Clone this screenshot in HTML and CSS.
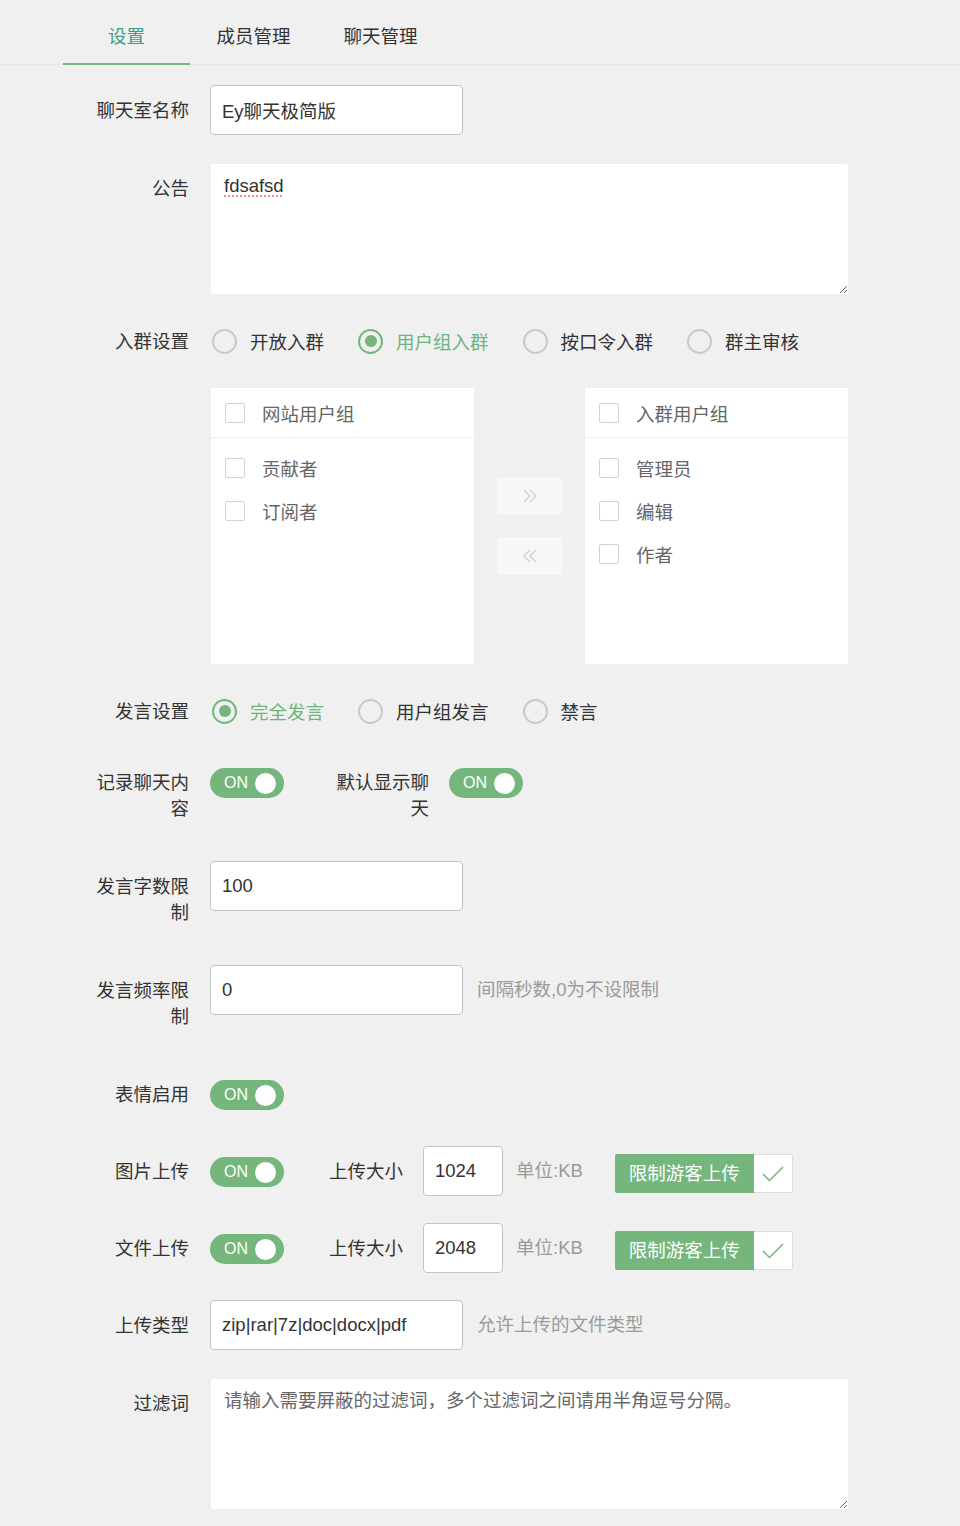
FILE: index.html
```html
<!DOCTYPE html>
<html lang="zh-CN">

<head>
  <link rel="stylesheet" href="styles.css">
  <meta charset="UTF-8">
  <meta name="viewport" content="width=device-width, initial-scale=1.0">
  <title>聊天室设置</title>
</head>

<body>

<div class="tab-bar">
  <div class="tab tab-active">设置</div>
  <div class="tab">成员管理</div>
  <div class="tab">聊天管理</div>
</div>

<form class="form">

  <div class="form-item">
    <label class="form-label">聊天室名称</label>
    <input class="input" type="text" value="Ey聊天极简版">
  </div>

  <div class="form-item">
    <label class="form-label">公告</label>
    <textarea class="textarea textarea-notice">fdsafsd</textarea>
  </div>

  <div class="form-item form-item-radio">
    <label class="form-label">入群设置</label>
    <div class="radio-group">
      <span class="radio"><i class="radio-icon"></i>开放入群</span>
      <span class="radio radio-checked"><i class="radio-icon"></i>用户组入群</span>
      <span class="radio"><i class="radio-icon"></i>按口令入群</span>
      <span class="radio"><i class="radio-icon"></i>群主审核</span>
    </div>
  </div>

  <div class="form-item">
    <div class="form-label"></div>
    <div class="transfer">
      <div class="transfer-box">
        <div class="transfer-head"><i class="checkbox"></i>网站用户组</div>
        <ul class="transfer-list">
          <li><i class="checkbox"></i>贡献者</li>
          <li><i class="checkbox"></i>订阅者</li>
        </ul>
      </div>
      <div class="transfer-buttons">
        <button type="button" class="transfer-btn">
          <svg width="18" height="18" viewBox="0 0 18 18" fill="none" stroke="#cfcfcf" stroke-width="1.4"><path d="M3 3l6 6-6 6M9 3l6 6-6 6"/></svg>
        </button>
        <button type="button" class="transfer-btn">
          <svg width="18" height="18" viewBox="0 0 18 18" fill="none" stroke="#cfcfcf" stroke-width="1.4"><path d="M9 3L3 9l6 6M15 3l-6 6 6 6"/></svg>
        </button>
      </div>
      <div class="transfer-box">
        <div class="transfer-head"><i class="checkbox"></i>入群用户组</div>
        <ul class="transfer-list">
          <li><i class="checkbox"></i>管理员</li>
          <li><i class="checkbox"></i>编辑</li>
          <li><i class="checkbox"></i>作者</li>
        </ul>
      </div>
    </div>
  </div>

  <div class="form-item form-item-radio">
    <label class="form-label">发言设置</label>
    <div class="radio-group">
      <span class="radio radio-checked"><i class="radio-icon"></i>完全发言</span>
      <span class="radio"><i class="radio-icon"></i>用户组发言</span>
      <span class="radio"><i class="radio-icon"></i>禁言</span>
    </div>
  </div>

  <div class="form-item">
    <label class="form-label">记录聊天内容</label>
    <span class="switch"><em>ON</em><i></i></span>
    <label class="form-label form-label-inline">默认显示聊天</label>
    <span class="switch"><em>ON</em><i></i></span>
  </div>

  <div class="form-item">
    <label class="form-label">发言字数限制</label>
    <input class="input" type="text" value="100">
  </div>

  <div class="form-item">
    <label class="form-label">发言频率限制</label>
    <input class="input" type="text" value="0">
    <span class="form-mid">间隔秒数,0为不设限制</span>
  </div>

  <div class="form-item form-item-tight">
    <label class="form-label">表情启用</label>
    <span class="switch"><em>ON</em><i></i></span>
  </div>

  <div class="form-item form-item-tight">
    <label class="form-label">图片上传</label>
    <span class="switch"><em>ON</em><i></i></span>
    <label class="form-label form-label-size">上传大小</label>
    <input class="input input-small" type="text" value="1024">
    <span class="form-mid form-mid-unit">单位:KB</span>
    <span class="check-btn"><span class="check-btn-text">限制游客上传</span><span class="check-btn-box"><svg width="22" height="16" viewBox="0 0 22 16" fill="none" stroke="#74b67c" stroke-width="1.5"><path d="M1 8l6.5 6.5L21 1"/></svg></span></span>
  </div>

  <div class="form-item form-item-tight">
    <label class="form-label">文件上传</label>
    <span class="switch"><em>ON</em><i></i></span>
    <label class="form-label form-label-size">上传大小</label>
    <input class="input input-small" type="text" value="2048">
    <span class="form-mid form-mid-unit">单位:KB</span>
    <span class="check-btn"><span class="check-btn-text">限制游客上传</span><span class="check-btn-box"><svg width="22" height="16" viewBox="0 0 22 16" fill="none" stroke="#74b67c" stroke-width="1.5"><path d="M1 8l6.5 6.5L21 1"/></svg></span></span>
  </div>

  <div class="form-item">
    <label class="form-label">上传类型</label>
    <input class="input" type="text" value="zip|rar|7z|doc|docx|pdf">
    <span class="form-mid">允许上传的文件类型</span>
  </div>

  <div class="form-item">
    <label class="form-label">过滤词</label>
    <textarea class="textarea" placeholder="请输入需要屏蔽的过滤词，多个过滤词之间请用半角逗号分隔。"></textarea>
  </div>

</form>

</body>

</html>
```

FILE: styles.css
```css
body {
  margin: 0;
  background-color: #f0f0f0;
  color: #333;
  font-family: "Liberation Sans", "Noto Sans CJK SC", sans-serif;
  font-size: 18.5px;
}

.tab-bar {
  display: flex;
  padding: 8px 0 0 63px;
  border-bottom: 1px solid #e8e8e8;
}

.tab {
  width: 127px;
  height: 55px;
  line-height: 58px;
  text-align: center;
  border-bottom: 2px solid transparent;
  margin-bottom: -1px;
}

.tab-active {
  color: #3b9c8a;
  border-bottom-color: #74b67c;
}

.form {
  padding-top: 20px;
}

.form-item {
  display: flex;
  align-items: flex-start;
  padding-left: 93px;
  margin-bottom: 28px;
}

.form-item-tight {
  margin-bottom: 27px;
}

.form-label {
  flex-shrink: 0;
  width: 96px;
  margin-right: 21px;
  padding: 13px 0 11px;
  line-height: 26px;
  text-align: right;
}

.form-label-inline {
  margin-left: 49px;
  margin-right: 20px;
}

.form-label-size {
  margin-left: 23px;
  margin-right: 20px;
}

.input {
  box-sizing: border-box;
  width: 253px;
  height: 50px;
  padding: 0 11px;
  border: 1px solid #c4c4c4;
  border-radius: 4px;
  background: #fff;
  color: #333;
  font: inherit;
  outline: none;
}

.input-small {
  width: 80px;
}

.form-mid {
  margin-left: 14px;
  padding-top: 1px;
  line-height: 48px;
  color: #9a9a9a;
}

.form-mid-unit {
  margin-left: 13px;
  margin-right: 32px;
}

.textarea {
  box-sizing: border-box;
  width: 639px;
  height: 132px;
  padding: 9px 13px;
  border: 1px solid #efefef;
  border-radius: 2px;
  background: #fff;
  color: #333;
  font: inherit;
  line-height: 26px;
  outline: none;
}

.textarea::placeholder {
  color: #666;
}

.textarea-notice {
  text-decoration: underline dotted #f08a80;
  text-underline-offset: 4px;
}

.form-item-radio .form-label {
  padding: 6px 0 4px;
}

.radio-group {
  display: flex;
  align-items: center;
  height: 36px;
  padding-left: 2px;
}

.radio {
  display: flex;
  align-items: center;
  margin-right: 34px;
}

.radio-icon {
  box-sizing: border-box;
  position: relative;
  width: 25px;
  height: 25px;
  margin-right: 13px;
  border: 2px solid #c9c9c9;
  border-radius: 50%;
}

.radio-checked {
  color: #6db47a;
}

.radio-checked .radio-icon {
  border-color: #74b67c;
}

.radio-checked .radio-icon::after {
  content: "";
  position: absolute;
  left: 4.5px;
  top: 4.5px;
  width: 12px;
  height: 12px;
  border-radius: 50%;
  background: #74b67c;
}

.transfer {
  display: flex;
  align-items: center;
}

.transfer-box {
  box-sizing: border-box;
  width: 265px;
  height: 278px;
  border: 1px solid #efefef;
  background: #fff;
  color: #666;
}

.transfer-head {
  display: flex;
  align-items: center;
  height: 49px;
  padding-left: 14px;
  border-bottom: 1px solid #eee;
}

.transfer-list {
  list-style: none;
  margin: 0;
  padding: 8px 0 0 14px;
}

.transfer-list li {
  display: flex;
  align-items: center;
  height: 43px;
}

.checkbox {
  box-sizing: border-box;
  width: 20px;
  height: 20px;
  margin-right: 17px;
  border: 1px solid #d2d2d2;
  border-radius: 2px;
  background: #fff;
}

.transfer-buttons {
  display: flex;
  flex-direction: column;
  gap: 22px;
  margin: 0 22px;
}

.transfer-btn {
  display: flex;
  align-items: center;
  justify-content: center;
  width: 65px;
  height: 38px;
  padding: 0;
  border: none;
  border-radius: 2px;
  background: #f7f7f7;
}

.switch {
  box-sizing: border-box;
  display: flex;
  align-items: center;
  justify-content: space-between;
  flex-shrink: 0;
  width: 74px;
  height: 30px;
  margin-top: 11px;
  padding: 0 8px 0 14px;
  border-radius: 15px;
  background: #74b67c;
  color: #fff;
  font-size: 16px;
}

.switch em {
  font-style: normal;
}

.switch i {
  width: 21px;
  height: 21px;
  border-radius: 50%;
  background: #fff;
}

.check-btn {
  display: flex;
  margin-top: 8px;
  height: 39px;
}

.check-btn-text {
  padding: 0 14px;
  line-height: 39px;
  color: #fff;
  background: #74b67c;
  border-radius: 2px 0 0 2px;
}

.check-btn-box {
  box-sizing: border-box;
  display: flex;
  align-items: center;
  justify-content: center;
  width: 39px;
  border: 1px solid #dcdcdc;
  border-left: none;
  border-radius: 0 2px 2px 0;
  background: #fff;
}
```
